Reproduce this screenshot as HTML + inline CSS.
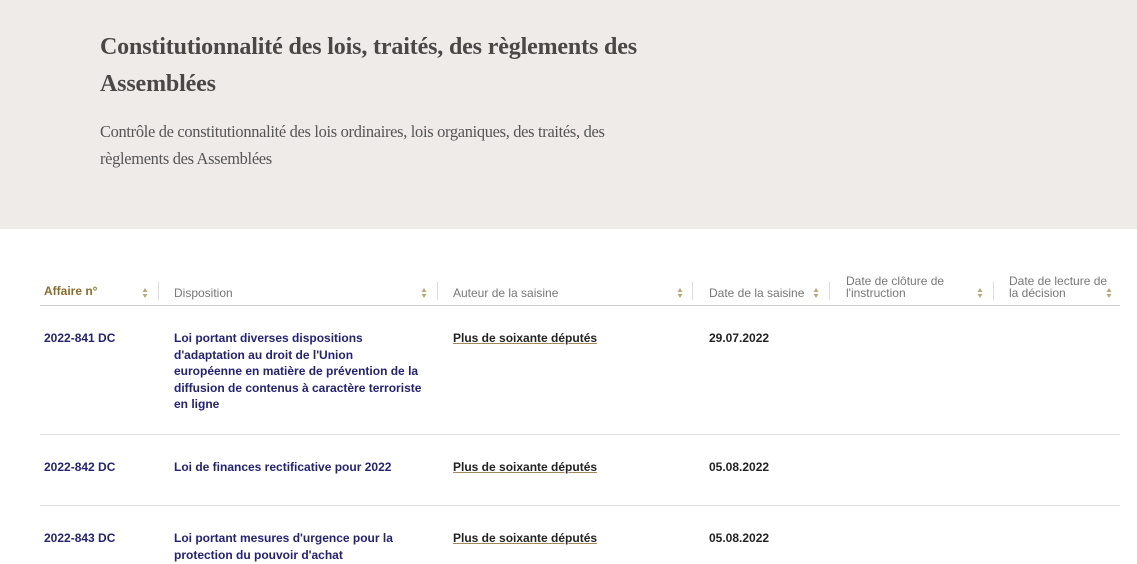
<!DOCTYPE html>
<html><head><meta charset="utf-8"><style>
body{margin:0;width:1137px;height:564px;overflow:hidden;background:#fff;font-family:"Liberation Sans",sans-serif}
.hero{position:absolute;left:0;top:0;width:1137px;height:229px;background:#efebe8}
h1{position:absolute;left:100px;top:29px;margin:0;width:600px;font-family:"Liberation Serif",serif;font-weight:bold;font-size:24px;line-height:37px;color:#4a4746;letter-spacing:-0.15px}
.sub{position:absolute;left:100px;top:118px;width:510px;font-family:"Liberation Serif",serif;font-size:16.4px;line-height:27px;color:#555;letter-spacing:-0.3px}
.th{position:absolute;font-size:12px;color:#777;line-height:12px}
.sep{position:absolute;top:282px;width:1px;height:18px;background:#ddd}
.sort{position:absolute;width:6px;height:12px}
.hline{position:absolute;left:40px;width:1080px;height:1px}
.c{position:absolute;font-size:12px;font-weight:bold;line-height:16.5px}
.b{color:#232373}.k{color:#222}.u{color:#222;text-decoration:underline;text-decoration-color:#a08a5a}
</style></head><body>
<div class="hero"></div>
<h1>Constitutionnalité des lois, traités, des règlements des Assemblées</h1>
<div class="sub">Contrôle de constitutionnalité des lois ordinaires, lois organiques, des traités, des règlements des Assemblées</div>

<div class="th" style="left:44px;top:285px;color:#8a6d2e;font-weight:bold">Affaire n°</div>
<div class="th" style="left:174px;top:287px">Disposition</div>
<div class="th" style="left:453px;top:287px">Auteur de la saisine</div>
<div class="th" style="left:709px;top:287px">Date de la saisine</div>
<div class="th" style="left:846px;top:275px">Date de clôture de<br>l'instruction</div>
<div class="th" style="left:1009px;top:275px">Date de lecture de<br>la décision</div>
<div class="sep" style="left:158px"></div><div class="sep" style="left:437px"></div><div class="sep" style="left:692px"></div><div class="sep" style="left:829px"></div><div class="sep" style="left:993px"></div>
<svg class="sort" style="left:142px;top:287px" viewBox="0 0 6 12"><path d="M3 1L5.5 5H.5zM3 11L5.5 7H.5z" fill="#bca77a"/></svg>
<svg class="sort" style="left:421px;top:287px" viewBox="0 0 6 12"><path d="M3 1L5.5 5H.5zM3 11L5.5 7H.5z" fill="#bca77a"/></svg>
<svg class="sort" style="left:677px;top:287px" viewBox="0 0 6 12"><path d="M3 1L5.5 5H.5zM3 11L5.5 7H.5z" fill="#bca77a"/></svg>
<svg class="sort" style="left:813px;top:287px" viewBox="0 0 6 12"><path d="M3 1L5.5 5H.5zM3 11L5.5 7H.5z" fill="#bca77a"/></svg>
<svg class="sort" style="left:977px;top:287px" viewBox="0 0 6 12"><path d="M3 1L5.5 5H.5zM3 11L5.5 7H.5z" fill="#bca77a"/></svg>
<svg class="sort" style="left:1106px;top:287px" viewBox="0 0 6 12"><path d="M3 1L5.5 5H.5zM3 11L5.5 7H.5z" fill="#bca77a"/></svg>
<div class="hline" style="top:305px;background:#ccc"></div>

<div class="c b" style="left:44px;top:330px">2022-841 DC</div>
<div class="c b" style="left:174px;top:330px;width:248px">Loi portant diverses dispositions d'adaptation au droit de l'Union européenne en matière de prévention de la diffusion de contenus à caractère terroriste en ligne</div>
<div class="c u" style="left:453px;top:330px">Plus de soixante députés</div>
<div class="c k" style="left:709px;top:330px">29.07.2022</div>
<div class="hline" style="top:434px;background:#ddd"></div>

<div class="c b" style="left:44px;top:459px">2022-842 DC</div>
<div class="c b" style="left:174px;top:459px">Loi de finances rectificative pour 2022</div>
<div class="c u" style="left:453px;top:459px">Plus de soixante députés</div>
<div class="c k" style="left:709px;top:459px">05.08.2022</div>
<div class="hline" style="top:505px;background:#ddd"></div>

<div class="c b" style="left:44px;top:530px">2022-843 DC</div>
<div class="c b" style="left:174px;top:530px;width:248px">Loi portant mesures d'urgence pour la protection du pouvoir d'achat</div>
<div class="c u" style="left:453px;top:530px">Plus de soixante députés</div>
<div class="c k" style="left:709px;top:530px">05.08.2022</div>
</body></html>
